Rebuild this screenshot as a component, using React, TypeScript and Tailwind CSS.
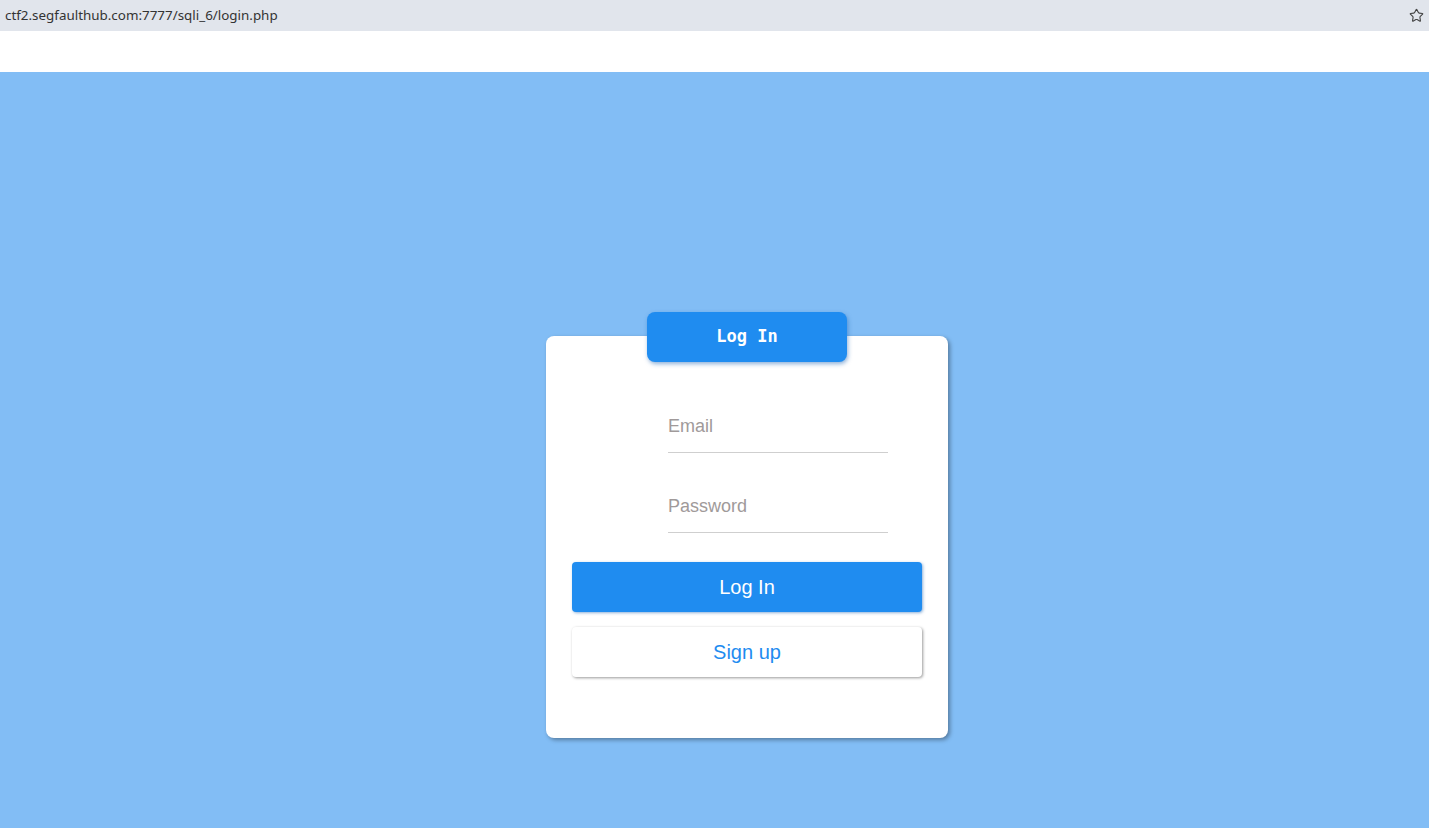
import { Star } from "lucide-react";

function AddressBar() {
  return (
    <div className="flex h-[31px] items-center justify-between bg-[#e1e5ec] pl-[5px] pr-[5px]">
      <span className="font-['Noto_Sans',sans-serif] text-[13.4px] text-[#333]">
        ctf2.segfaulthub.com:7777/sqli_6/login.php
      </span>
      <Star size={15} strokeWidth={1.8} className="text-[#444]" />
    </div>
  );
}

function UnderlineInput({ placeholder, type }: { placeholder: string; type: string }) {
  return (
    <input
      type={type}
      placeholder={placeholder}
      className="h-[41px] w-[220px] border-b border-[#cfcfcf] bg-transparent pb-3 font-['Liberation_Sans',Arial,sans-serif] text-[18px] text-[#333] outline-none placeholder:text-[#a09a9a]"
    />
  );
}

export default function App() {
  return (
    <div className="flex h-[828px] flex-col overflow-hidden">
      <AddressBar />
      <div className="h-[41px] bg-white" />
      <div className="flex-1 bg-[#82bdf5] pl-[546px] pt-[264px]">
        <div className="relative w-[402px] rounded-lg bg-white px-[26px] pb-[61px] pt-[76px] shadow-[2px_2px_4px_rgba(0,0,0,0.35)]">
          <div className="absolute -top-6 left-[101px] flex h-[50px] w-[200px] items-center justify-center rounded-lg bg-[#1f8cf0] shadow-[1px_2px_4px_rgba(30,100,180,0.5)]">
            <span className="font-['DejaVu_Sans_Mono',monospace] text-[17px] font-bold text-white">Log In</span>
          </div>
          <div className="flex flex-col items-start gap-[39px] pl-[96px]">
            <UnderlineInput placeholder="Email" type="email" />
            <UnderlineInput placeholder="Password" type="password" />
          </div>
          <div className="mt-[29px] flex flex-col gap-[15px] font-['Liberation_Sans',Arial,sans-serif] text-[20px]">
            <button className="h-[50px] w-full rounded bg-[#1f8cf0] text-white shadow-[1px_1px_3px_rgba(30,100,180,0.5)]">
              Log In
            </button>
            <button className="h-[50px] w-full rounded bg-white text-[#1f8cf0] shadow-[1px_1px_3px_rgba(0,0,0,0.4)]">
              Sign up
            </button>
          </div>
        </div>
      </div>
    </div>
  );
}
